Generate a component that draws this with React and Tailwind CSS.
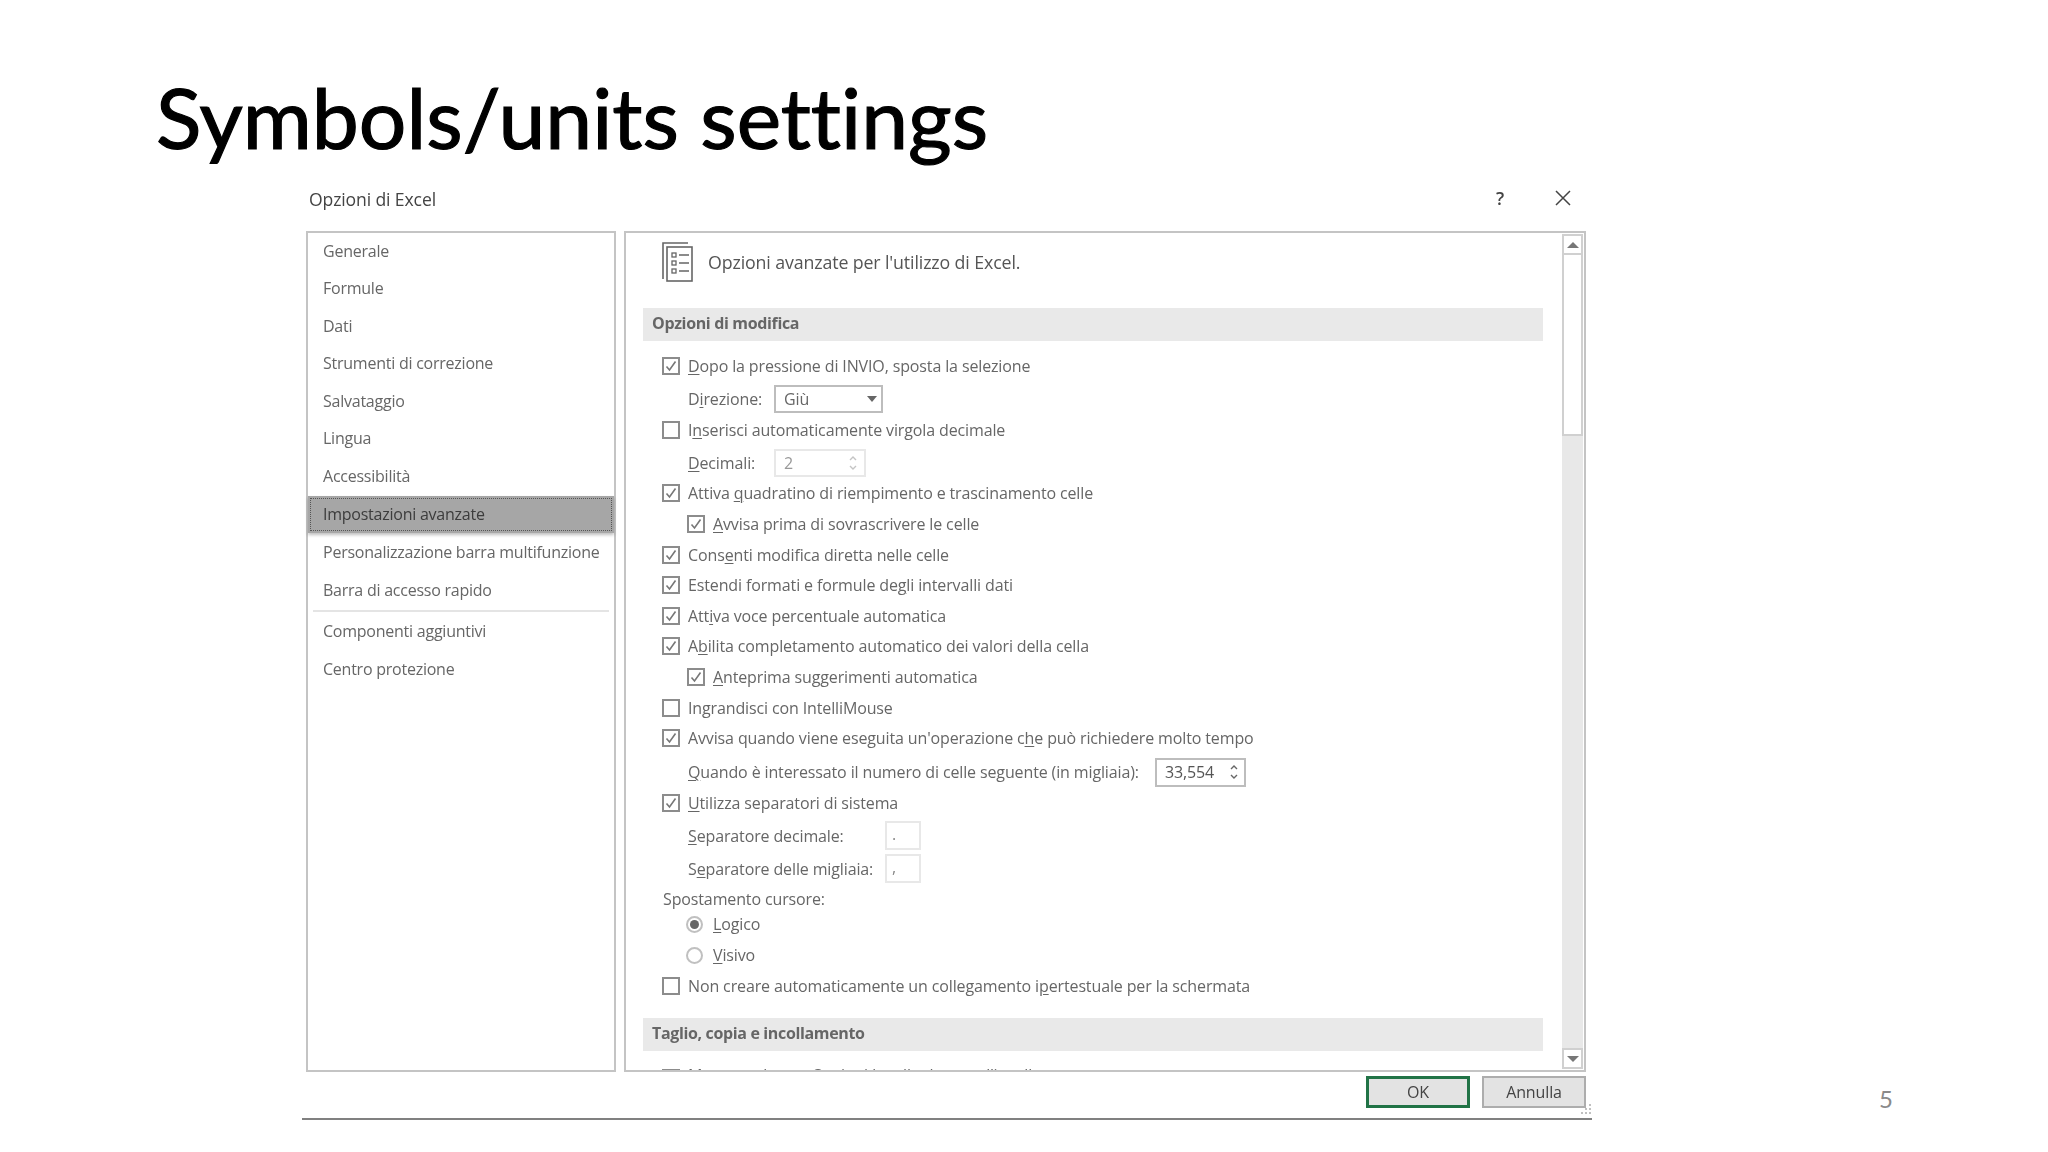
const uiFont = "font-['Open_Sans','Noto_Sans',sans-serif]";

function U({ children }) {
  return <span className="underline decoration-1 underline-offset-2">{children}</span>;
}

function Check({ on }) {
  return (
    <span className="w-[18px] h-[18px] shrink-0 border-2 border-[#8c8c8c] bg-white flex items-center justify-center">
      {on && (
        <svg width="14" height="14" viewBox="0 0 14 14" fill="none">
          <path d="M2.5 7.5 L5.5 11 L11.5 2.5" stroke="#777" strokeWidth="1.6" />
        </svg>
      )}
    </span>
  );
}

function Row({ on, nested, children }) {
  return (
    <div className={`h-[30.6px] shrink-0 flex items-center gap-[8.5px] ${nested ? "pl-[43.5px]" : "pl-[18.5px]"}`}>
      <Check on={on} />
      <span>{children}</span>
    </div>
  );
}

function Spin({ light }) {
  const c = light ? "#c4c4c4" : "#666";
  return (
    <svg width="10" height="20" viewBox="0 0 10 20" fill="none">
      <path d="M2 7 L5 4 L8 7" stroke={c} strokeWidth="1.4" />
      <path d="M2 13 L5 16 L8 13" stroke={c} strokeWidth="1.4" />
    </svg>
  );
}

function Section({ children, className }) {
  return (
    <div className={`h-[33px] shrink-0 mr-[19px] bg-[#e9e9e9] flex items-center pl-[9px] pb-[3px] font-bold tracking-[-0.35px] text-[#666] ${className}`}>
      {children}
    </div>
  );
}

function SepRow({ label, value }) {
  return (
    <div className="h-[31px] mt-[2px] shrink-0 flex items-center pl-[45px]">
      <span className="w-[197px]">{label}</span>
      <span className="w-[36px] h-[29px] border-2 border-[#e8e8e8] pl-[5px] text-[#888] leading-[22px]">{value}</span>
    </div>
  );
}

const nav1 = ["Generale", "Formule", "Dati", "Strumenti di correzione", "Salvataggio", "Lingua", "Accessibilità"];

function Item({ children }) {
  return <div className="h-[37.5px] flex items-center pl-[15px] pb-[2px] tracking-[-0.24px]">{children}</div>;
}

export default function App() {
  return (
    <div className="w-[2048px] h-[1152px] bg-white overflow-hidden flex flex-col">
      <h1 className="h-[176px] pl-[156px] pt-[62px] text-[84px] leading-[110px] text-black font-['Lato',sans-serif] font-normal [font-variant-ligatures:none] [-webkit-text-stroke:1.2px_black]">
        Symbols/units settings
      </h1>

      <div className="flex">
        <div className={`w-[1290px] ml-[302px] blur-[0.35px] text-[16px] tracking-[-0.13px] text-[#666] ${uiFont}`}>
          <div className="h-[55px] flex items-center pl-[7px] pb-[11px] text-[#444] relative">
            <span className="text-[17.6px] mt-[3px]">Opzioni di Excel</span>
            <span className="ml-auto text-[18px] font-semibold text-[#444] mr-[51px]">?</span>
            <svg className="mr-[21px]" width="16" height="16" viewBox="0 0 16 16" fill="none">
              <path d="M1 1 L15 15 M15 1 L1 15" stroke="#444" strokeWidth="1.5" />
            </svg>
          </div>

          <div className="flex gap-2 pl-[4px] h-[841px]">
            <nav className="w-[310px] border-2 border-[#c4c4c4] flex flex-col">
              {nav1.map((t) => (
                <Item key={t}>{t}</Item>
              ))}
              <div className="h-[37px] bg-[#a6a6a6] shadow-[0_2px_3px_rgba(0,0,0,0.25)] p-[2px] tracking-[-0.24px]">
                <div className="h-full border border-dotted border-[#555] flex items-center pl-[12px] pb-[1px] text-[#3c3c3c]">
                  Impostazioni avanzate
                </div>
              </div>
              <div className="mt-[2px]">
                <Item>Personalizzazione barra multifunzione</Item>
                <Item>Barra di accesso rapido</Item>
              </div>
              <div className="h-[2px] mx-[5px] mb-[2px] bg-[#e4e4e4]" />
              <Item>Componenti aggiuntivi</Item>
              <Item>Centro protezione</Item>
            </nav>

            <section className="w-[962px] border-2 border-[#c4c4c4] flex overflow-hidden">
              <div className="flex-1 min-w-0 flex flex-col overflow-hidden pl-[17px]">
                <div className="h-[75px] shrink-0 flex items-center gap-[15px] pl-[19px] pb-[18px]">
                  <svg width="31" height="40" viewBox="0 0 31 40" fill="none" stroke="#666" strokeWidth="1.3">
                    <path d="M1 37 V1 H26" strokeWidth="1.6" />
                    <rect x="5" y="5" width="25" height="34" strokeWidth="1.6" />
                    <rect x="10" y="11" width="4" height="4" />
                    <rect x="10" y="19" width="4" height="4" />
                    <rect x="10" y="27" width="4" height="4" />
                    <path d="M17 13 H27 M17 21 H27 M17 29 H27" />
                  </svg>
                  <span className="text-[17.8px] mt-[2px] text-[#555]">Opzioni avanzate per l'utilizzo di Excel.</span>
                </div>

                <Section>Opzioni di modifica</Section>

                <div className="h-[10px] shrink-0" />
                <Row on><U>D</U>opo la pressione di INVIO, sposta la selezione</Row>
                <div className="h-[31px] mt-[2px] shrink-0 flex items-center pl-[45px]">
                  <span className="w-[86px]">D<U>i</U>rezione:</span>
                  <span className="w-[109px] h-[28px] border-2 border-[#bdbdbd] flex items-center pl-[8px] pr-[4px] justify-between">
                    Giù
                    <svg width="10" height="6" viewBox="0 0 10 6"><path d="M0 0 H10 L5 6 Z" fill="#666" /></svg>
                  </span>
                </div>
                <Row><span>I<U>n</U>serisci automaticamente virgola decimale</span></Row>
                <div className="h-[31px] mt-[2px] shrink-0 flex items-center pl-[45px]">
                  <span className="w-[86px]"><U>D</U>ecimali:</span>
                  <span className="w-[92px] h-[28px] border-2 border-[#e8e8e8] flex items-center pl-[8px] pr-[6px] justify-between text-[#999]">
                    2
                    <Spin light />
                  </span>
                </div>
                <Row on>Attiva <U>q</U>uadratino di riempimento e trascinamento celle</Row>
                <Row on nested><U>A</U>vvisa prima di sovrascrivere le celle</Row>
                <Row on>Cons<U>e</U>nti modifica diretta nelle celle</Row>
                <Row on>Estendi formati e formule de<U>g</U>li intervalli dati</Row>
                <Row on>Att<U>i</U>va voce percentuale automatica</Row>
                <Row on>A<U>b</U>ilita completamento automatico dei valori della cella</Row>
                <Row on nested><U>A</U>nteprima suggerimenti automatica</Row>
                <Row>In<U>g</U>randisci con IntelliMouse</Row>
                <Row on>Avvisa quando viene eseguita un'operazione c<U>h</U>e può richiedere molto tempo</Row>
                <div className="h-[31px] mt-[3px] shrink-0 flex items-center pl-[45px]">
                  <span className="w-[467px]"><U>Q</U>uando è interessato il numero di celle seguente (in migliaia):</span>
                  <span className="w-[91px] h-[29px] border-2 border-[#bdbdbd] flex items-center pl-[8px] pr-[5px] justify-between text-[#555]">
                    33,554
                    <Spin />
                  </span>
                </div>
                <Row on><U>U</U>tilizza separatori di sistema</Row>
                <SepRow label={<><U>S</U>eparatore decimale:</>} value="." />
                <SepRow label={<>S<U>e</U>paratore delle migliaia:</>} value="," />
                <div className="h-[20px] mt-[5px] shrink-0 flex items-center pl-[20px]">Spostamento cursore:</div>
                <div className="h-[30.6px] shrink-0 flex items-center pl-[43px] gap-[10px]">
                  <span className="w-[17px] h-[17px] rounded-full border-2 border-[#c0c0c0] flex items-center justify-center">
                    <span className="w-[9px] h-[9px] rounded-full bg-[#666]" />
                  </span>
                  <span><U>L</U>ogico</span>
                </div>
                <div className="h-[30.6px] shrink-0 flex items-center pl-[43px] gap-[10px]">
                  <span className="w-[17px] h-[17px] rounded-full border-2 border-[#c0c0c0]" />
                  <span><U>V</U>isivo</span>
                </div>
                <Row>Non creare automaticamente un collegamento i<U>p</U>ertestuale per la schermata</Row>

                <Section className="mt-[17px]">Taglio, copia e incollamento</Section>
                <div className="h-[12px] shrink-0" />
                <Row><span className="block -mt-[7px]">Mostra pulsante Opzioni Incolla durante l'incollamento</span></Row>
              </div>

              <div className="w-[21px] mr-[1px] my-[1px] flex flex-col shrink-0">
                <div className="h-[21px] border-2 border-[#d0d0d0] flex items-center justify-center">
                  <svg width="12" height="6" viewBox="0 0 12 6"><path d="M0 6 H12 L6 0 Z" fill="#777" /></svg>
                </div>
                <div className="h-[181px] border-2 border-t-0 border-[#d0d0d0]" />
                <div className="flex-1 bg-[#e8e8e8]" />
                <div className="h-[21px] border-2 border-[#d0d0d0] flex items-center justify-center">
                  <svg width="12" height="6" viewBox="0 0 12 6"><path d="M0 0 H12 L6 6 Z" fill="#777" /></svg>
                </div>
              </div>
            </section>
          </div>

          <div className="relative flex justify-end gap-[12px] pr-[6px] pt-[4px] text-[#444] text-[16px]">
            <button className="w-[104px] h-[32px] bg-[#e3e3e3] border-[3px] border-[#217346] flex items-center justify-center">OK</button>
            <button className="w-[104px] h-[32px] bg-[#e3e3e3] border-2 border-[#adadad] flex items-center justify-center">Annulla</button>
            <svg className="absolute right-0 bottom-[-7px]" width="11" height="11" viewBox="0 0 11 11" fill="#c0c0c0">
              <rect x="8" y="0" width="2" height="2" />
              <rect x="8" y="4" width="2" height="2" />
              <rect x="4" y="4" width="2" height="2" />
              <rect x="8" y="8" width="2" height="2" />
              <rect x="4" y="8" width="2" height="2" />
              <rect x="0" y="8" width="2" height="2" />
            </svg>
          </div>
          <div className="mt-[10px] h-[2px] bg-[#808080]" />
        </div>

        <div className="self-end ml-[287px] mb-[9px] text-[24px] leading-[24px] text-[#8a8a8a] font-['Lato',sans-serif]">5</div>
      </div>
    </div>
  );
}
